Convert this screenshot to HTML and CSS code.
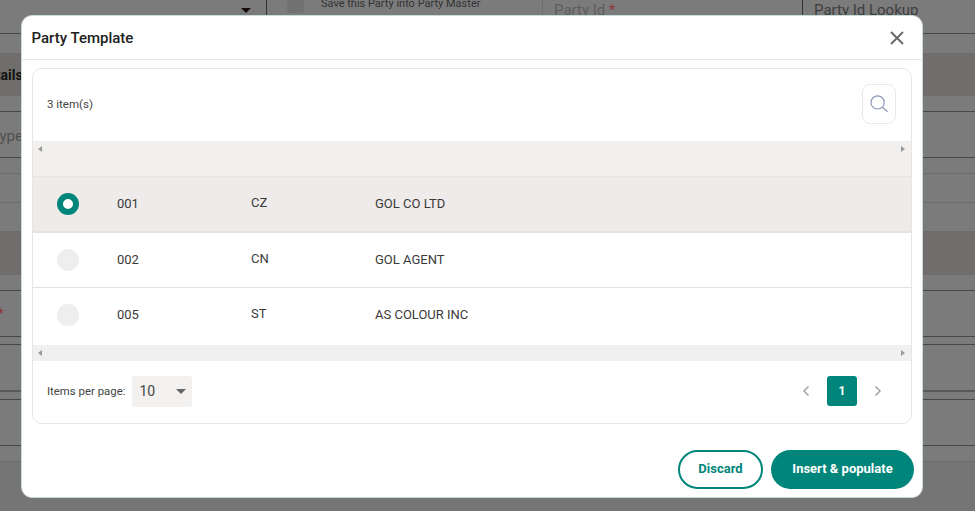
FILE: index.html
```html
<!DOCTYPE html>
<html lang="en">
<head>
<meta charset="utf-8">
<title>Party Template</title>
<link rel="stylesheet" href="styles.css">
</head>
<body>
<div class="page">
  <div class="strip strip-top">
    <div class="top-caret-cell"><span class="caret"></span></div>
    <div class="top-check-cell"><span class="check"></span><span class="save-label">Save this Party into Party Master</span></div>
    <div class="top-field"><span>Party Id <b class="req">*</b></span></div>
    <div class="top-lookup"><span>Party Id Lookup</span></div>
  </div>
  <div class="gap h19"></div>
  <div class="band h43"><span class="band-title">Party Details</span></div>
  <div class="strip h16"></div>
  <div class="strip h46 type-row"><span class="faint-text">Type</span></div>
  <div class="faint h16"></div>
  <div class="faint h29"></div>
  <div class="faint h29"></div>
  <div class="band h43"></div>
  <div class="strip h16"></div>
  <div class="strip h46 clip-right"><span class="req-mark">*</span></div>
  <div class="strip h8"></div>
  <div class="thick h47"></div>
  <div class="strip h8"></div>
  <div class="strip h46"></div>
  <div class="faint h16"></div>
</div>

<div class="modal" role="dialog" aria-label="Party Template">
  <header class="modal-head">
    <h2 class="modal-title">Party Template</h2>
    <svg class="close" viewBox="0 0 14 14" aria-label="Close"><path d="M1 1 13 13M13 1 1 13"/></svg>
  </header>
  <section class="card">
    <div class="toolbar">
      <span class="count">3 item(s)</span>
      <button class="search" aria-label="Search">
        <svg viewBox="0 0 20 20"><circle cx="8.6" cy="8.4" r="6.6"/><path d="m13.4 13.2 5.2 4.6"/></svg>
      </button>
    </div>
    <div class="scroll scroll-head"><span class="arrow left"></span><span class="arrow right"></span></div>
    <div class="row selected">
      <span class="radio on"></span><span class="c-id">001</span><span class="c-code">CZ</span><span class="c-name">GOL CO LTD</span>
    </div>
    <div class="row">
      <span class="radio"></span><span class="c-id">002</span><span class="c-code">CN</span><span class="c-name">GOL AGENT</span>
    </div>
    <div class="row last">
      <span class="radio"></span><span class="c-id">005</span><span class="c-code">ST</span><span class="c-name">AS COLOUR INC</span>
    </div>
    <div class="scroll scroll-foot"><span class="arrow left"></span><span class="arrow right"></span></div>
    <div class="pager">
      <span class="per-page">Items per page:</span>
      <div class="select"><span>10</span><span class="select-caret"></span></div>
      <div class="pages">
        <svg class="chev" viewBox="0 0 8 12"><path d="M6.5 1.5 2 6l4.500 4.500"/></svg>
        <span class="page-num">1</span>
        <svg class="chev" viewBox="0 0 8 12"><path d="M1.500 1.500 6 6l-4.500 4.500"/></svg>
      </div>
    </div>
  </section>
  <footer class="modal-foot">
    <button class="btn outline">Discard</button>
    <button class="btn solid">Insert &amp; populate</button>
  </footer>
</div>
</body>
</html>
```
FILE: styles.css
```css
* { box-sizing: border-box; }
html, body { margin: 0; height: 100%; overflow: hidden; }
body { background: #757575; font-family: Roboto, "Liberation Sans", sans-serif; color: #2b2b2b; }

/* dimmed page behind the dialog */
.page { width: 975px; background: #7b7b7b; color: #111; display: flex; flex-direction: column; overflow: hidden; }
.strip { border-bottom: 1px solid #474747; flex: none; }
.faint { border-bottom: 1px solid #6c6c6c; flex: none; }
.thick { border-bottom: 2px solid #595959; flex: none; }
.gap { flex: none; }
.band { background: #706e6c; flex: none; display: flex; align-items: center; overflow: hidden; }
.h8 { height: 8px; }
.h16 { height: 16px; }
.h19 { height: 19px; }
.h29 { height: 29px; }
.h43 { height: 43px; }
.h46 { height: 46px; }
.h47 { height: 47px; }
.clip-right { display: flex; align-items: center; }
.type-row { display: flex; align-items: center; padding-top: 3px; }

.strip-top { height: 34px; display: flex; align-items: flex-start; font-size: 11px; }
.top-caret-cell { width: 267px; height: 15px; border-right: 1px solid #333; display: flex; justify-content: flex-end; padding: 8px 15px 0 0; }
.caret { width: 0; height: 0; border: 5px solid transparent; border-top: 5px solid #170c0c; border-bottom: 0; }
.top-check-cell { width: 276px; display: flex; gap: 17px; padding-left: 20px; height: 15px; border-right: 1px solid #6e6e6e; }
.check { width: 17px; height: 13px; background: #727272; border-radius: 0 0 3px 3px; flex: none; }
.save-label { margin-top: -3px; color: #333; white-space: nowrap; line-height: 14px; }
.top-field { width: 260px; height: 15px; border-right: 1px solid #333; padding-left: 11px; font-size: 15px; color: #5e5e5e; white-space: nowrap; line-height: 20px; }
.req { color: #8a3a3a; font-weight: 400; }
.top-lookup { padding-left: 11px; font-size: 15px; color: #3e3e3e; white-space: nowrap; line-height: 20px; }

.band-title { font-size: 14px; font-weight: 700; margin-left: -58px; white-space: nowrap; color: #111; width: 84px; }
.faint-text { font-size: 15px; color: #505050; margin-left: -9px; }
.req-mark { color: #8b2f2f; font-size: 15px; margin-left: -3px; }

/* dialog */
.modal { position: absolute; left: 21px; top: 15px; width: 902px; height: 483px; background: #fff; border: 1px solid #c9dad9; border-radius: 11px; display: flex; flex-direction: column; overflow: hidden; }
.modal-head { height: 44px; flex: none; display: flex; align-items: center; justify-content: space-between; padding: 0 18px 0 9.500px; border-bottom: 1px solid #e6e6e6; }
.modal-title { margin: 0; font-size: 15px; font-weight: 500; color: #212121; }
.close { width: 14px; height: 14px; }
.close path { fill: none; stroke: #666; stroke-width: 1.8; }

.card { margin: 8px 10px 0 10px; height: 356px; flex: none; border: 1px solid #e8e6e2; border-radius: 10px; overflow: hidden; display: flex; flex-direction: column; }
.toolbar { height: 72px; flex: none; display: flex; align-items: center; justify-content: space-between; padding: 0 15px 3px 14px; }
.count { font-size: 11.500px; color: #444; }
.search { width: 34px; height: 40px; padding: 0; background: #fff; border: 1px solid #e6e8f2; border-radius: 8px; display: flex; align-items: center; justify-content: center; }
.search svg { width: 20px; height: 20px; }
.search circle, .search path { fill: none; stroke: #8f98b8; stroke-width: 1.2; }

.scroll { flex: none; background: #f1f0ef; display: flex; justify-content: space-between; padding: 0 6px 0 5px; }
.scroll-head { height: 36px; padding-top: 5px; border-bottom: 1px solid #e6e6e6; }
.scroll-foot { height: 16px; align-items: center; background: #f0f0f0; }
.arrow { width: 0; height: 0; border: 3.5px solid transparent; }
.arrow.left { border-right: 4px solid #999; border-left: 0; }
.arrow.right { border-left: 4px solid #999; border-right: 0; }

.row { flex: none; height: 55px; display: grid; grid-template-columns: 84px 134px 124px 1fr; align-items: center; font-size: 13px; color: #3a3a3a; border-bottom: 1px solid #e2e2e2; }
.row.last { border-bottom: 0; height: 57px; padding-bottom: 3px; }
.row.selected { background: #eeebea; height: 56px; border-bottom: 2px solid #e4e4e4; }
.radio { width: 22px; height: 22px; border-radius: 50%; background: #eeeeee; margin-left: 24px; }
.radio.on { background: #fff; border: 6px solid #00857a; }
.c-id { padding-bottom: 2px; }
.c-code { padding-bottom: 4px; }
.c-name { padding-bottom: 2px; }

.pager { flex: 1; display: flex; align-items: center; padding: 0 14px 2px; }
.per-page { font-size: 11.400px; color: #444; margin-right: 7px; white-space: nowrap; }
.select { width: 60px; height: 31px; background: #f2f1f0; border-radius: 3px; display: flex; align-items: center; justify-content: space-between; padding: 0 6px 0 7px; font-size: 14px; color: #444; }
.select-caret { width: 0; height: 0; border: 5px solid transparent; border-top: 5px solid #666; border-bottom: 0; margin-top: 1px; }
.pages { margin-left: auto; display: flex; align-items: center; gap: 17px; padding-right: 15px; }
.chev { width: 8px; height: 12px; }
.chev path { fill: none; stroke: #a3a3a3; stroke-width: 1.500; }
.page-num { width: 30px; height: 30px; background: #00857a; color: #fff; border-radius: 3px; display: flex; align-items: center; justify-content: center; font-size: 12px; font-weight: 700; }

.modal-foot { flex: 1; display: flex; justify-content: flex-end; align-items: flex-start; gap: 8px; padding: 26px 8px 0 0; }
.btn { height: 39px; border-radius: 20px; font-family: inherit; font-size: 13px; font-weight: 700; padding: 0 0 2px; }
.outline { width: 85px; background: #fff; border: 2px solid #00857a; color: #00857a; }
.solid { width: 143px; background: #00857a; border: 0; color: #fff; }
```
